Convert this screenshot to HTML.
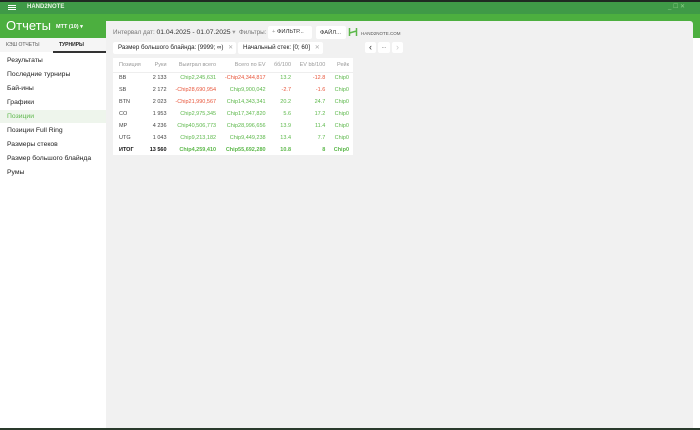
<!DOCTYPE html>
<html><head><meta charset="utf-8"><style>
*{margin:0;padding:0;box-sizing:border-box}
body{width:700px;height:430px;overflow:hidden;background:#fff;font-family:"Liberation Sans",sans-serif;position:relative}
.abs{position:absolute}
.t{position:absolute;white-space:nowrap}
table{border-collapse:collapse;font-size:5.5px}
td{height:12px;padding:0 4px;text-align:right;color:#444}
td:first-child{text-align:left;padding-left:6px}
.g{color:#5cb84a}.r{color:#e8553a}
.hd td{color:#999;height:13px;border-bottom:1px solid #eee}
.menu div{position:absolute;left:7px;font-size:6.8px;color:#222}
</style></head><body>
<div class="abs" style="left:0;top:0;width:700px;height:2px;background:#1f2a22"></div>
<div class="abs" style="left:0;top:2px;width:700px;height:12px;background:#3f9a47"></div>
<div class="abs" style="left:0;top:14px;width:700px;height:24px;background:#4caf3f"></div>
<div class="abs" style="left:8px;top:5px;width:8px;height:1px;background:#fff;box-shadow:0 2px #fff,0 4px #fff"></div>
<div class="t" style="left:27px;top:4px;font-size:6px;color:#e8f5e4;font-weight:bold">HAND2NOTE</div>
<div class="t" style="left:668px;top:3px;font-size:6px;color:#8fcf8a">_ ☐ ✕</div>
<div class="t" style="left:6px;top:18px;font-size:13px;color:#fff">Отчеты</div>
<div class="t" style="left:56px;top:24px;font-size:5.5px;color:#fff;font-weight:bold">MTT (10) ▾</div>
<div class="abs" style="left:0;top:38px;width:106px;height:14px;background:#f5f5f5"></div>
<div class="t" style="left:6px;top:42px;font-size:5px;color:#555">КЭШ ОТЧЕТЫ</div>
<div class="t" style="left:59px;top:42px;font-size:5px;color:#222;font-weight:bold">ТУРНИРЫ</div>
<div class="abs" style="left:53px;top:51px;width:53px;height:1.5px;background:#333"></div>
<div class="abs" style="left:0;top:110px;width:106px;height:13px;background:#eef5ec"></div>
<div class="menu">
<div style="top:57px">Результаты</div>
<div style="top:71px">Последние турниры</div>
<div style="top:85px">Бай-ины</div>
<div style="top:99px">Графики</div>
<div style="top:113px;color:#5cb84a">Позиции</div>
<div style="top:127px">Позиции Full Ring</div>
<div style="top:141px">Размеры стеков</div>
<div style="top:155px">Размер большого блайнда</div>
<div style="top:169px">Румы</div>
</div>
<div class="abs" style="left:106px;top:21px;width:587px;height:407px;background:#f1f1f1;border-top-right-radius:3px"></div>
<div class="abs" style="left:0;top:428px;width:700px;height:2px;background:#2a3a2c"></div>
<div class="t" style="left:113px;top:29px;font-size:6.3px;color:#777">Интервал дат: <span style="color:#333;font-size:6.8px">01.04.2025 - 01.07.2025</span> <span style="color:#999">▾</span></div>
<div class="t" style="left:239px;top:29px;font-size:6.3px;color:#777">Фильтры:</div>
<div class="abs" style="left:268px;top:26px;width:44px;height:13px;background:#fff;border-radius:2px"></div>
<div class="t" style="left:272px;top:29px;font-size:5.8px;color:#333"><span style="color:#999">+</span> ФИЛЬТР...</div>
<div class="abs" style="left:316px;top:26px;width:30px;height:13px;background:#fff;border-radius:2px"></div>
<div class="t" style="left:320px;top:30px;font-size:5.8px;color:#333">ФАЙЛ...</div>
<svg class="abs" style="left:348px;top:27px" width="10" height="10"><path d="M1.5 1v8M8.5 1v8M1.5 6L8.5 4" stroke="#5cb84a" stroke-width="1.5" fill="none"/></svg>
<div class="t" style="left:361px;top:31px;font-size:4.5px;color:#555">HAND2NOTE.COM</div>
<div class="abs" style="left:113px;top:42px;width:123px;height:12px;background:#fff;border-radius:2px"></div>
<div class="t" style="left:118px;top:44px;font-size:6.2px;color:#222">Размер большого блайнда: [9999; ∞) <span style="color:#aaa;margin-left:3px">✕</span></div>
<div class="abs" style="left:238px;top:42px;width:85px;height:12px;background:#fff;border-radius:2px"></div>
<div class="t" style="left:243px;top:44px;font-size:6.2px;color:#222">Начальный стек: [0; 60] <span style="color:#aaa;margin-left:3px">✕</span></div>
<div class="abs" style="left:365px;top:42px;width:11px;height:11px;background:#fff;border-radius:2px;font-size:9px;text-align:center;line-height:10px;color:#333">‹</div>
<div class="abs" style="left:378px;top:42px;width:12px;height:11px;background:#fff;border-radius:2px;font-size:5px;text-align:center;line-height:10px;color:#333">...</div>
<div class="abs" style="left:392px;top:42px;width:11px;height:11px;background:#fff;border-radius:2px;font-size:9px;text-align:center;line-height:10px;color:#ccc">›</div>
<div class="abs" style="left:113px;top:58px;width:240px;height:97px;background:#fff">
<table style="width:240px;margin-top:1px">
<tr class="hd"><td>Позиция</td><td>Руки</td><td>Выиграл всего</td><td>Всего по EV</td><td>бб/100</td><td>EV bb/100</td><td>Рейк</td></tr>
<tr><td>BB</td><td>2 133</td><td class="g">Chip2,245,631</td><td class="r">-Chip24,344,817</td><td class="g">13.2</td><td class="r">-12.8</td><td class="g">Chip0</td></tr>
<tr><td>SB</td><td>2 172</td><td class="r">-Chip28,690,954</td><td class="g">Chip9,900,042</td><td class="r">-2.7</td><td class="r">-1.6</td><td class="g">Chip0</td></tr>
<tr><td>BTN</td><td>2 023</td><td class="r">-Chip21,990,567</td><td class="g">Chip14,343,341</td><td class="g">20.2</td><td class="g">24.7</td><td class="g">Chip0</td></tr>
<tr><td>CO</td><td>1 953</td><td class="g">Chip2,975,345</td><td class="g">Chip17,347,820</td><td class="g">5.6</td><td class="g">17.2</td><td class="g">Chip0</td></tr>
<tr><td>MP</td><td>4 236</td><td class="g">Chip40,506,773</td><td class="g">Chip28,996,656</td><td class="g">13.9</td><td class="g">11.4</td><td class="g">Chip0</td></tr>
<tr><td>UTG</td><td>1 043</td><td class="g">Chip9,213,182</td><td class="g">Chip9,449,238</td><td class="g">13.4</td><td class="g">7.7</td><td class="g">Chip0</td></tr>
<tr style="font-weight:bold"><td style="color:#111">ИТОГ</td><td style="color:#111">13 560</td><td class="g">Chip4,259,410</td><td class="g">Chip55,692,280</td><td class="g">10.8</td><td class="g">8</td><td class="g">Chip0</td></tr>
</table></div>
</body></html>
